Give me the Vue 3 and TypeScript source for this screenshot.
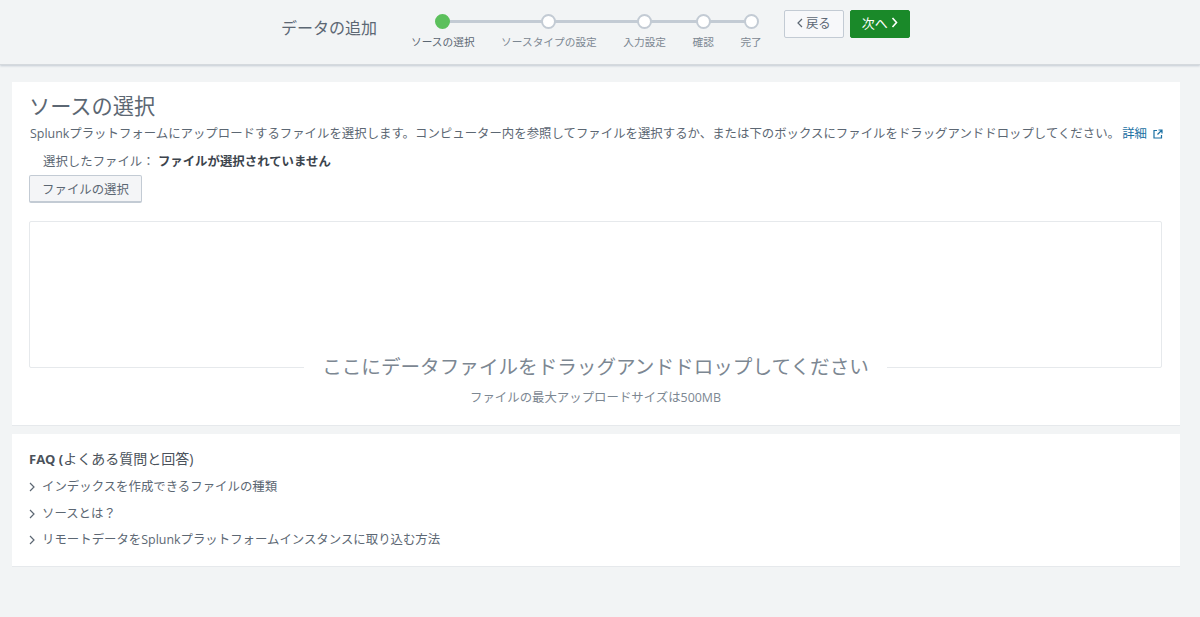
<template>
  <div class="page">
    <header class="topbar">
      <h1 class="wizard-title">データの追加</h1>
      <ol class="steps">
        <li v-for="(s, i) in steps" :key="s" class="step" :class="{ active: i === 0, last: i === steps.length - 1 }">
          <span class="dot"></span>
          <span class="step-label">{{ s }}</span>
        </li>
      </ol>
      <div class="nav-buttons">
        <button type="button" class="btn back">
          <svg class="chev" width="6" height="10" viewBox="0 0 6 10"><path d="M5 1 1 5l4 4" /></svg>戻る
        </button>
        <button type="button" class="btn next">
          次へ<svg class="chev" width="7" height="11" viewBox="0 0 7 11"><path d="m1.500 1 4 4.500-4 4.500" /></svg>
        </button>
      </div>
    </header>

    <main class="content">
      <section class="card source">
        <h2>ソースの選択</h2>
        <p class="desc">
          Splunkプラットフォームにアップロードするファイルを選択します。コンピューター内を参照してファイルを選択するか、または下のボックスにファイルをドラッグアンドドロップしてください。
          <a class="link">詳細<svg class="ext" width="10" height="10" viewBox="0 0 10 10"><path d="M4 1.500H1v7.500h7.500V6M5.500 1H9v3.500M9 1 4.500 5.500" /></svg></a>
        </p>
        <p class="selected">選択したファイル： <strong>ファイルが選択されていません</strong></p>
        <button type="button" class="btn pick">ファイルの選択</button>
        <div class="dropzone"></div>
        <div class="drop-title">ここにデータファイルをドラッグアンドドロップしてください</div>
        <p class="drop-note">ファイルの最大アップロードサイズは500MB</p>
      </section>

      <section class="card faq">
        <h3><b>FAQ (</b>よくある質問と回答)</h3>
        <ul>
          <li v-for="q in questions" :key="q">
            <svg class="chev" width="6" height="10" viewBox="0 0 6 10"><path d="m1 1 4 4-4 4" /></svg>{{ q }}
          </li>
        </ul>
      </section>
    </main>
  </div>
</template>

<script setup lang="ts">
const steps: string[] = ['ソースの選択', 'ソースタイプの設定', '入力設定', '確認', '完了']
const questions: string[] = [
  'インデックスを作成できるファイルの種類',
  'ソースとは？',
  'リモートデータをSplunkプラットフォームインスタンスに取り込む方法',
]
</script>

<style>
html,
body {
  background: #f2f4f5;
}
</style>

<style scoped>
.page {
  min-height: 617px;
  background: #f2f4f5;
  color: #5c6773;
  font-family: "Open Sans", "Noto Sans CJK JP", sans-serif;
  font-size: 12.41px;
}
.topbar {
  height: 65px;
  box-sizing: border-box;
  padding: 10px 290px 0 281px;
  display: flex;
  align-items: flex-start;
  border-bottom: 1px solid #d5d9dd;
  box-shadow: 0 1px 2px #c3cbd4;
}
.wizard-title {
  margin: 7px 34px 0 0;
  font-size: 16px;
  line-height: 22px;
  font-weight: 400;
  color: #5c6773;
}
.steps {
  display: flex;
  gap: 26.5px;
  margin: 0;
  padding: 0;
  list-style: none;
}
.step {
  position: relative;
  display: flex;
  flex-direction: column;
  align-items: center;
  padding-top: 4px;
}
.step::after {
  content: "";
  position: absolute;
  top: 10px;
  left: 50%;
  height: 3px;
  background: #c3cbd4;
}
.step:nth-child(1)::after {
  width: 106px;
}
.step:nth-child(2)::after {
  width: 96px;
}
.step:nth-child(3)::after {
  width: 60px;
}
.step:nth-child(4)::after {
  width: 48px;
}
.step.last::after {
  display: none;
}
.dot {
  position: relative;
  z-index: 1;
  width: 15px;
  height: 15px;
  box-sizing: border-box;
  border: 2.5px solid #c3cbd4;
  border-radius: 50%;
  background: #fff;
}
.active .dot {
  background: #5cc05c;
  border-color: #5cc05c;
}
.step-label {
  margin-top: 5px;
  font-size: 10.7px;
  line-height: 16px;
  white-space: nowrap;
  color: #7c8792;
}
.active .step-label {
  color: #5c6773;
}
.nav-buttons {
  display: flex;
  gap: 6px;
  margin-left: 22px;
}
.btn {
  box-sizing: border-box;
  height: 28px;
  padding: 0;
  border: 1px solid #c3cbd4;
  border-radius: 2px;
  background: #f7f8fa;
  color: #5c6773;
  font: inherit;
  display: inline-flex;
  align-items: center;
  justify-content: center;
  gap: 3px;
}
.back,
.next {
  width: 60px;
  padding-bottom: 3px;
}
.next {
  background: #1a8929;
  border-color: #1a8929;
  color: #fff;
  font-size: 13px;
}
.chev {
  flex: none;
}
.chev path {
  fill: none;
  stroke: currentColor;
  stroke-width: 1.2;
}
.next .chev path {
  stroke-width: 1.6;
}
.content {
  padding: 17px 20px 0 12px;
  display: flex;
  flex-direction: column;
  gap: 8px;
}
.card {
  background: #fff;
  border-bottom: 1px solid #e6e9ec;
  padding: 0 18px 0 17px;
}
.source {
  height: 344px;
  box-sizing: border-box;
}
h2 {
  margin: 0;
  padding-top: 10px;
  font-size: 21.2px;
  line-height: 28px;
  font-weight: 400;
  color: #5c6773;
}
.desc {
  margin: 4px 0 0 1px;
  line-height: 20px;
  white-space: nowrap;
}
.link {
  color: #1a70a3;
  margin-left: -1px;
}
.ext {
  margin-left: 6px;
  vertical-align: -1px;
}
.ext path {
  fill: none;
  stroke: currentColor;
  stroke-width: 1.2;
}
.selected {
  margin: 8px 0 0 14px;
  line-height: 20px;
}
.selected strong {
  color: #3c444d;
  font-weight: 700;
}
.pick {
  display: flex;
  margin-top: 3px;
  width: 113px;
  background: #f4f5f7;
  border-bottom-width: 2px;
}
.dropzone {
  box-sizing: border-box;
  height: 147px;
  margin-top: 18px;
  border: 1px solid #e6e9ec;
  border-radius: 2px;
}
.drop-title {
  width: fit-content;
  margin: -15px auto 0;
  padding: 0 18px;
  background: #fff;
  font-size: 19.6px;
  line-height: 28px;
  color: #7c8792;
}
.drop-note {
  margin: 7px 0 0;
  text-align: center;
  line-height: 20px;
  color: #7c8792;
}
.faq {
  height: 133px;
  box-sizing: border-box;
  padding-top: 14px;
}
h3 {
  margin: 0;
  font-size: 14px;
  line-height: 22px;
  font-weight: 400;
  color: #4a525b;
}
h3 b {
  font-size: 13px;
}
ul {
  margin: 4px 0 0;
  padding: 0;
  list-style: none;
}
ul li {
  display: flex;
  align-items: center;
  gap: 7px;
  line-height: 26.5px;
}
</style>
